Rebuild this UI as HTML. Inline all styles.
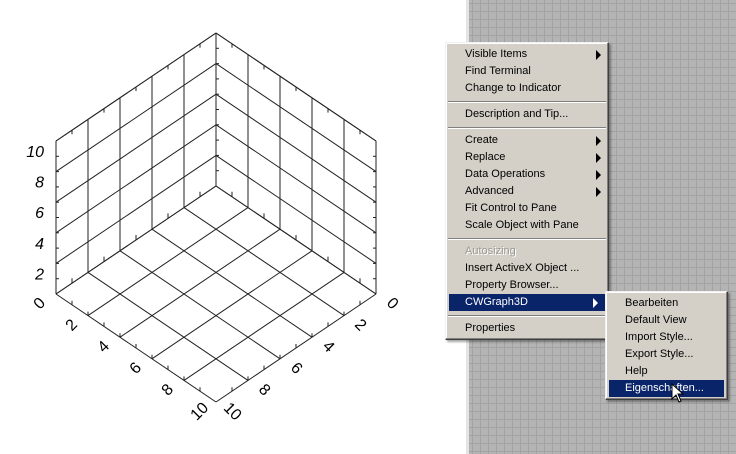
<!DOCTYPE html>
<html><head><meta charset="utf-8"><style>
body{margin:0;width:736px;height:454px;overflow:hidden;background:#fff;font-family:"Liberation Sans",sans-serif;position:relative}
#gray{position:absolute;left:469px;top:0;width:267px;height:454px;background-color:#b4b4b4;
background-image:linear-gradient(#a2a2a2 1px,transparent 1px),linear-gradient(90deg,#a2a2a2 1px,transparent 1px);background-size:8px 8px;background-position:3px 3px;border-left:3px solid #e4e4e4;margin-left:-3px}
.menu{position:absolute;background:#d4d0c8;border:1px solid;border-color:#f0f0f0 #404040 #404040 #f0f0f0;box-shadow:inset -1px -1px #808080,inset 1px 1px #fff,2px 2px 2px rgba(0,0,0,.35);font-size:11px;color:#000}
.it{height:17px;line-height:17px;padding-left:19px;position:relative;white-space:nowrap}
.sep{height:1px;background:#808080;border-bottom:1px solid #fff;margin:4px 2px 3px}
.hl{background:#0a246a;color:#fff}
.arr{position:absolute;right:7px;top:4px;width:0;height:0;border-left:5px solid currentColor;border-top:5px solid transparent;border-bottom:5px solid transparent}
.dis{color:#9c9a94;text-shadow:1px 1px #fff}
</style></head><body>
<svg id="plot" width="470" height="454" style="position:absolute;left:0;top:0"></svg>
<div id="gray"></div>
<div class="menu" style="left:445px;top:42px;width:162px;padding:3px 0 2px">
<div class="it">Visible Items<span class="arr"></span></div>
<div class="it">Find Terminal</div>
<div class="it">Change to Indicator</div>
<div class="sep"></div>
<div class="it">Description and Tip...</div>
<div class="sep"></div>
<div class="it">Create<span class="arr"></span></div>
<div class="it">Replace<span class="arr"></span></div>
<div class="it">Data Operations<span class="arr"></span></div>
<div class="it">Advanced<span class="arr"></span></div>
<div class="it">Fit Control to Pane</div>
<div class="it">Scale Object with Pane</div>
<div class="sep"></div>
<div class="it dis">Autosizing</div>
<div class="it">Insert ActiveX Object ...</div>
<div class="it">Property Browser...</div>
<div class="it hl" style="margin:0 3px;padding-left:16px">CWGraph3D<span class="arr"></span></div>
<div class="sep"></div>
<div class="it">Properties</div>
</div>
<div class="menu" style="left:605px;top:291px;width:121px;padding:3px 0 2px">
<div class="it">Bearbeiten</div>
<div class="it">Default View</div>
<div class="it">Import Style...</div>
<div class="it">Export Style...</div>
<div class="it">Help</div>
<div class="it hl" style="margin:0 3px;padding-left:16px">Eigenschaften...</div>
</div>
<svg width="14" height="22" style="position:absolute;left:671px;top:383px"><path d="M1 1 L1 16 L5 12 L8 19 L10 18 L7 11 L12 11 Z" fill="#fff" stroke="#000" stroke-width="1"/></svg>
<script>
var s=document.getElementById('plot'),h='';
var C=[216,186],L=[-160,108],R=[160,108],U=[0,-153];
function p(a,b,c){return [C[0]+a*L[0]+b*R[0]+c*U[0],C[1]+a*L[1]+b*R[1]+c*U[1]];}
function ln(P,Q,w){h+='<line x1="'+P[0]+'" y1="'+P[1]+'" x2="'+Q[0]+'" y2="'+Q[1]+'" stroke="#222" stroke-width="'+(w||1)+'"/>';}
for(var i=0;i<=5;i++){var t=i/5;
ln(p(t,0,0),p(t,0,1));ln(p(0,t,0),p(0,t,1));
ln(p(0,0,t),p(1,0,t));ln(p(0,0,t),p(0,1,t));
ln(p(t,0,0),p(t,1,0));ln(p(0,t,0),p(1,t,0));}
ln(p(1,0,1),p(0,0,1));ln(p(0,1,1),p(0,0,1));
for(var i=1;i<10;i++){var t=i/10;
var a=p(1,0,t);ln(a,[a[0]+3,a[1]]);var b=p(0,1,t);ln(b,[b[0]-3,b[1]]);var c=p(0,0,t);ln(c,[c[0]+3,c[1]]);
var d=p(t,0,1);ln(d,[d[0],d[1]+4]);var e=p(0,t,1);ln(e,[e[0],e[1]+4]);
var f=p(1,t,0);ln(f,[f[0],f[1]-4]);var g=p(t,1,0);ln(g,[g[0],g[1]-4]);
var k=p(t,0,0);ln(k,[k[0],k[1]-5]);var m=p(0,t,0);ln(m,[m[0],m[1]-5]);}
var zl=['2','4','6','8','10'];
for(var j=0;j<5;j++){var q=p(1,0,(j+1)/5);h+='<text x="'+(q[0]-12)+'" y="'+(q[1]+16)+'" font-size="16" font-style="italic" text-anchor="end" font-family="Liberation Sans">'+zl[j]+'</text>';}
for(var j=0;j<=5;j++){var v=String(j*2);
var q=p(1,j/5,0);h+='<text transform="translate('+(q[0]-16)+','+(q[1]+10)+') rotate(-45)" font-size="16" text-anchor="middle" dominant-baseline="middle" font-family="Liberation Sans">'+v+'</text>';
var r=p(j/5,1,0);h+='<text transform="translate('+(r[0]+16)+','+(r[1]+10)+') rotate(45)" font-size="16" text-anchor="middle" dominant-baseline="middle" font-family="Liberation Sans">'+v+'</text>';}
s.innerHTML=h;
</script>
</body></html>
